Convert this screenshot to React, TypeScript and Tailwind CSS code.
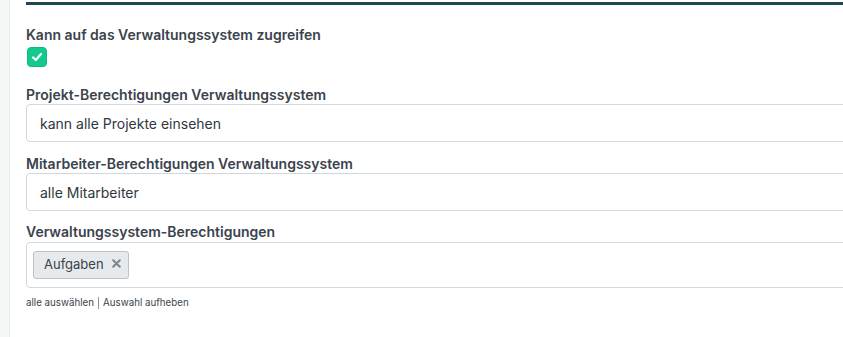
const App = () => {
  const font = { fontFamily: "Inter, 'Noto Sans', sans-serif" };

  return (
    <div className="flex h-[337px] w-[843px] overflow-hidden bg-white" style={font}>
      <div className="w-[10px] shrink-0 border-r border-[#e8ebee] bg-[#f4f6f8]" />
      <div className="w-[840px] shrink-0 pl-4">
        <div className="mt-[2px] h-[3px] bg-[#1f4750]" />

        <div className="pt-[21px]">
          <label className="block text-[14px] font-semibold leading-[18px] text-[#3a434c]">
            Kann auf das Verwaltungssystem zugreifen
          </label>
          <div className="mt-[3px] ml-[1px] flex h-[20px] w-[20px] items-center justify-center rounded-[4px] border border-[#0fb982] bg-[#13c98e]">
            <svg width="14" height="14" viewBox="0 0 14 14" fill="none">
              <path d="M3 7.4 L5.8 10 L11 4" stroke="white" strokeWidth="2.2" strokeLinecap="round" strokeLinejoin="round" />
            </svg>
          </div>
        </div>

        <div className="mt-[19px]">
          <label className="block text-[14px] font-semibold leading-[18px] text-[#3a434c]">
            Projekt-Berechtigungen Verwaltungssystem
          </label>
          <div className="flex h-[38px] items-center rounded-[4px] border border-[#d2d7dc] px-[13px] text-[14px] text-[#2f3740]">
            kann alle Projekte einsehen
          </div>
        </div>

        <div className="mt-[13px]">
          <label className="block text-[14px] font-semibold leading-[18px] text-[#3a434c]">
            Mitarbeiter-Berechtigungen Verwaltungssystem
          </label>
          <div className="flex h-[38px] items-center rounded-[4px] border border-[#d2d7dc] px-[13px] text-[14px] text-[#2f3740]">
            alle Mitarbeiter
          </div>
        </div>

        <div className="mt-[12px]">
          <label className="block text-[14px] font-semibold leading-[18px] text-[#3a434c]">
            Verwaltungssystem-Berechtigungen
          </label>
          <div className="mt-px flex h-[46px] items-center rounded-[4px] border border-[#d2d7dc] px-[6px]">
            <span className="flex h-[28px] items-center gap-[8px] rounded-[3px] border border-[#b9c3ca] bg-[#e6eaed] pl-[10px] pr-[7px] text-[13px] text-[#3a434c]">
              Aufgaben
              <svg width="9" height="9" viewBox="0 0 9 9" className="mb-[3px]">
                <path d="M1.2 1.2 L7.8 7.8 M7.8 1.2 L1.2 7.8" stroke="#7a858e" strokeWidth="2" strokeLinecap="round" />
              </svg>
            </span>
          </div>
          <div className="mt-[8px] flex items-center gap-[4px] text-[9.75px] text-[#3a434c]">
            <span>alle auswählen</span>
            <span className="h-[12px] w-px bg-[#8a939b]" />
            <span>Auswahl aufheben</span>
          </div>
        </div>
      </div>
    </div>
  );
};

export default App;
